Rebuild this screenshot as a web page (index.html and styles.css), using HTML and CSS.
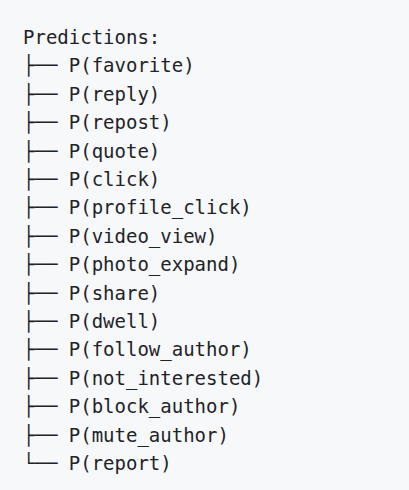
FILE: index.html
```html
<!DOCTYPE html>
<html>
<head>
<meta charset="utf-8">
<link rel="stylesheet" href="styles.css">
</head>
<body>
<pre class="code">Predictions:
├── P(favorite)
├── P(reply)
├── P(repost)
├── P(quote)
├── P(click)
├── P(profile_click)
├── P(video_view)
├── P(photo_expand)
├── P(share)
├── P(dwell)
├── P(follow_author)
├── P(not_interested)
├── P(block_author)
├── P(mute_author)
└── P(report)</pre>
</body>
</html>
```
FILE: styles.css
```css
html, body {
  margin: 0;
  background: #f6f8fa;
}
.code {
  margin: 0;
  padding: 23px 23px;
  font-family: "DejaVu Sans Mono", monospace;
  font-size: 19px;
  line-height: 28.4px;
  color: #1f2328;
}
```
